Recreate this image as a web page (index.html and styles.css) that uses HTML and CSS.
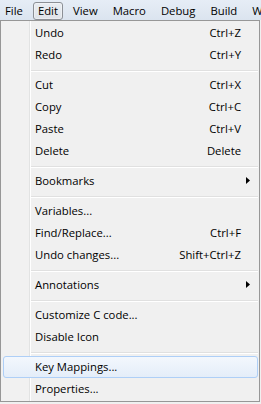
FILE: index.html
```html
<!DOCTYPE html>
<html>
<head>
<meta charset="utf-8">
<link rel="stylesheet" href="styles.css">
</head>
<body>
<div class="menubar">
  <span class="mb-item">File</span>
  <span class="mb-item active">Edit</span>
  <span class="mb-item">View</span>
  <span class="mb-item">Macro</span>
  <span class="mb-item">Debug</span>
  <span class="mb-item">Build</span>
  <span class="mb-item">Window</span>
</div>
<div class="menu">
  <div class="item"><span class="label">Undo</span><span class="key">Ctrl+Z</span><span class="sub"></span></div>
  <div class="item"><span class="label">Redo</span><span class="key">Ctrl+Y</span><span class="sub"></span></div>
  <div class="sep"></div>
  <div class="item"><span class="label">Cut</span><span class="key">Ctrl+X</span><span class="sub"></span></div>
  <div class="item"><span class="label">Copy</span><span class="key">Ctrl+C</span><span class="sub"></span></div>
  <div class="item"><span class="label">Paste</span><span class="key">Ctrl+V</span><span class="sub"></span></div>
  <div class="item"><span class="label">Delete</span><span class="key">Delete</span><span class="sub"></span></div>
  <div class="sep"></div>
  <div class="item"><span class="label">Bookmarks</span><span class="key"></span><span class="sub"><svg class="arrow" width="4" height="7" viewBox="0 0 4 7"><polygon points="0,0 4,3.5 0,7" fill="#000"/></svg></span></div>
  <div class="sep"></div>
  <div class="item"><span class="label">Variables...</span><span class="key"></span><span class="sub"></span></div>
  <div class="item"><span class="label">Find/Replace...</span><span class="key">Ctrl+F</span><span class="sub"></span></div>
  <div class="item"><span class="label">Undo changes...</span><span class="key">Shift+Ctrl+Z</span><span class="sub"></span></div>
  <div class="sep"></div>
  <div class="item"><span class="label">Annotations</span><span class="key"></span><span class="sub"><svg class="arrow" width="4" height="7" viewBox="0 0 4 7"><polygon points="0,0 4,3.5 0,7" fill="#000"/></svg></span></div>
  <div class="sep"></div>
  <div class="item"><span class="label">Customize C code...</span><span class="key"></span><span class="sub"></span></div>
  <div class="item"><span class="label">Disable Icon</span><span class="key"></span><span class="sub"></span></div>
  <div class="sep"></div>
  <div class="item hover"><span class="label">Key Mappings...</span><span class="key"></span><span class="sub"></span></div>
  <div class="item"><span class="label">Properties...</span><span class="key"></span><span class="sub"></span></div>
</div>
</body>
</html>
```
FILE: styles.css
```css
html, body {
  margin: 0;
  padding: 0;
}
body {
  width: 261px;
  height: 404px;
  overflow: hidden;
  background: #f0f0f0;
  font-family: "Open Sans", "Noto Sans", sans-serif;
  font-size: 11.3px;
  color: #000;
}
.menubar {
  display: flex;
  gap: 5px;
  height: 20px;
  box-sizing: border-box;
  padding-top: 2px;
  background: linear-gradient(#e6edf6, #dbe4ef);
  white-space: nowrap;
  overflow: hidden;
}
.mb-item {
  display: flex;
  align-items: center;
  height: 18px;
  box-sizing: border-box;
  padding: 0 4px 1px;
  border: 1px solid transparent;
  border-radius: 3px;
}
.mb-item.active {
  border-color: #8c9096;
  background: linear-gradient(#e9edf2, #dfe4ea);
  box-shadow: inset 0 0 0 1px rgba(255,255,255,0.35);
}
.menu {
  width: 260px;
  box-sizing: border-box;
  border: 1px solid #979797;
  padding: 1px 1px 1px 2px;
  background: linear-gradient(to right, #f1f1f1 0, #f1f1f1 28px, #e2e3e3 28px, #e2e3e3 29px, #ffffff 29px, #ffffff 30px, #f0f0f0 30px);
  display: flex;
  flex-direction: column;
}
.item {
  display: grid;
  grid-template-columns: 1fr auto 17px;
  align-items: center;
  height: 22px;
  box-sizing: border-box;
  padding: 0 0 1px 32px;
  border: 1px solid transparent;
  border-left-width: 0;
  border-right-width: 0;
  white-space: nowrap;
}
.item.hover {
  border: 1px solid #aecff7;
  border-radius: 3px;
  padding-left: 31px;
  background: linear-gradient(#f3f7fd, #e4edf9);
}
.key {
  text-align: right;
}
.sub {
  display: flex;
  align-items: center;
  padding-left: 5px;
}
.arrow {
  display: block;
}
.sep {
  height: 8px;
  box-sizing: border-box;
  margin-left: 28px;
  padding-top: 4px;
}
.sep::before {
  content: "";
  display: block;
  height: 1px;
  background: #e0e0e0;
  border-bottom: 1px solid #ffffff;
}
```
